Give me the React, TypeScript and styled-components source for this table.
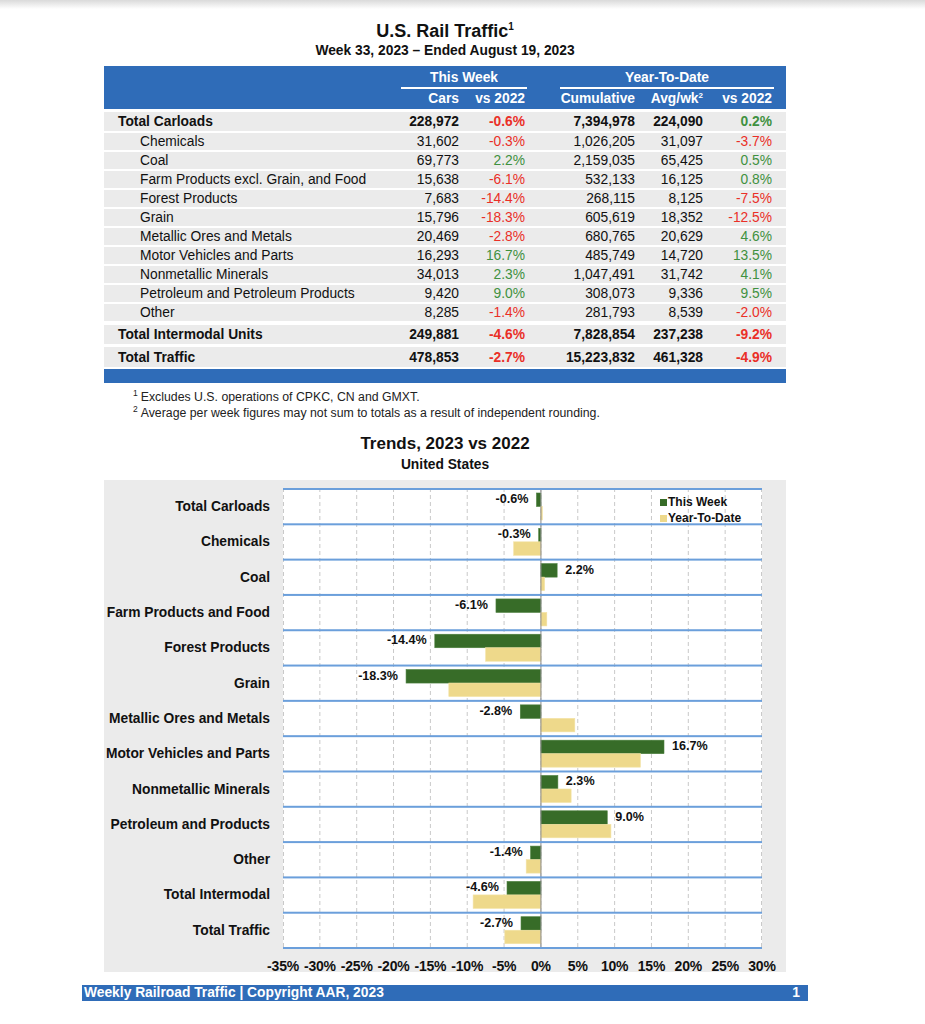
import React from 'react'
import styled, { createGlobalStyle } from 'styled-components'

const GlobalStyle = createGlobalStyle`
  html, body {
    margin: 0;
    padding: 0;
  }
  body {
    font-family: 'Liberation Sans', Arial, sans-serif;
    color: #111;
    background: linear-gradient(to bottom, #dadada 0px, #ffffff 9px) no-repeat, #fff;
  }
`

const COLS = '291px 64px 66px 35px 75px 68px 69px 14px'
const BLUE = '#2f6cb8'

const Sheet = styled.div`
  width: 682px;
  margin-left: 104px;
  padding-top: 20px;
`

const Title = styled.h1`
  margin: 0;
  font-size: 18px;
  line-height: 22px;
  font-weight: bold;
  text-align: center;
  sup {
    font-size: 10px;
    vertical-align: 7px;
    line-height: 0;
  }
`

const SubTitle = styled.div`
  margin-top: 1px;
  font-size: 13.8px;
  line-height: 16px;
  font-weight: bold;
  text-align: center;
`

const TableHead = styled.div`
  margin-top: 7px;
  background: ${BLUE};
  color: #fff;
  font-size: 13.8px;
  font-weight: bold;
  display: grid;
  grid-template-columns: ${COLS};
  padding: 4px 0 3px;
`

const GroupCell = styled.div<{ $from: number; $to: number; $inset: number }>`
  grid-row: 1;
  grid-column: ${p => p.$from} / ${p => p.$to};
  text-align: center;
  line-height: 15px;
  padding-bottom: 2px;
  border-bottom: 2px solid #fff;
  margin-left: ${p => p.$inset}px;
  margin-right: -2px;
`

const HeadCell = styled.div<{ $col: number }>`
  grid-row: 2;
  grid-column: ${p => p.$col};
  text-align: right;
  line-height: 15px;
  margin-top: 2px;
  white-space: nowrap;
  sup {
    font-size: 8px;
    vertical-align: 5px;
    line-height: 0;
  }
`

const BodyRow = styled.div<{ $gap: number; $h: number; $bold?: boolean }>`
  display: grid;
  grid-template-columns: ${COLS};
  align-items: center;
  height: ${p => p.$h}px;
  border-top: ${p => p.$gap}px solid #fff;
  background: #ebebeb;
  font-size: 13.8px;
  font-weight: ${p => (p.$bold ? 'bold' : 'normal')};
`

const Label = styled.div<{ $indent: number }>`
  padding-left: ${p => p.$indent}px;
  white-space: nowrap;
`

const Num = styled.div<{ $col: number; $tone?: 'up' | 'down' }>`
  grid-column: ${p => p.$col};
  text-align: right;
  white-space: nowrap;
  color: ${p => (p.$tone === 'down' ? '#ea2f27' : p.$tone === 'up' ? '#3f9140' : '#111')};
`

const BottomBar = styled.div`
  margin-top: 2px;
  height: 14px;
  background: ${BLUE};
`

const Notes = styled.div`
  margin-top: 6px;
  padding-left: 29px;
  font-size: 12.3px;
  line-height: 16px;
  color: #222;
  sup {
    font-size: 8.5px;
    vertical-align: 5px;
    line-height: 0;
    margin-right: 3px;
  }
`

const ChartTitle = styled.div`
  margin-top: 13px;
  font-size: 17px;
  line-height: 20px;
  font-weight: bold;
  text-align: center;
`

const ChartSub = styled.div`
  margin-top: 3px;
  font-size: 13.8px;
  line-height: 16px;
  font-weight: bold;
  text-align: center;
`

const ChartPanel = styled.div`
  margin-top: 7px;
  background: #ebebeb;
  padding-top: 8px;
  height: 492px;
  box-sizing: border-box;
  display: grid;
  grid-template-columns: 179px 479px 1fr;
  grid-template-rows: 461px auto;
`

const CatList = styled.div`
  display: grid;
  grid-template-rows: repeat(13, 35.31px);
  padding-top: 1px;
`

const Cat = styled.div`
  display: flex;
  align-items: center;
  justify-content: flex-end;
  padding-right: 13px;
  font-size: 13.8px;
  font-weight: bold;
  white-space: nowrap;
`

const Plot = styled.div`
  position: relative;
  background: #fff;
  height: 461px;
`

const Legend = styled.div`
  position: absolute;
  left: 377px;
  top: 6px;
  font-size: 12px;
  font-weight: bold;
  line-height: 16px;
`

const LegendItem = styled.div<{ $color: string }>`
  display: flex;
  align-items: center;
  &::before {
    content: '';
    width: 7px;
    height: 7px;
    background: ${p => p.$color};
    margin-right: 1px;
  }
`

const Axis = styled.div`
  grid-column: 2 / 4;
  display: grid;
  grid-template-columns: repeat(14, 36.846px);
  margin-left: -18.4px;
  padding-top: 9px;
  font-size: 14px;
  font-weight: bold;
  line-height: 16px;
  letter-spacing: -0.2px;
`

const Tick = styled.div`
  text-align: center;
  white-space: nowrap;
`

const Footer = styled.div`
  width: 726px;
  margin: 13px 0 0 82px;
  height: 16px;
  background: ${BLUE};
  color: #fff;
  font-size: 13.8px;
  font-weight: bold;
  line-height: 16px;
  display: flex;
  justify-content: space-between;
  padding: 0 8px 0 2px;
  box-sizing: border-box;
`

type Row = [string, string, string, string, string, string]

const carloads: Row[] = [
  ['Chemicals', '31,602', '-0.3%', '1,026,205', '31,097', '-3.7%'],
  ['Coal', '69,773', '2.2%', '2,159,035', '65,425', '0.5%'],
  ['Farm Products excl. Grain, and Food', '15,638', '-6.1%', '532,133', '16,125', '0.8%'],
  ['Forest Products', '7,683', '-14.4%', '268,115', '8,125', '-7.5%'],
  ['Grain', '15,796', '-18.3%', '605,619', '18,352', '-12.5%'],
  ['Metallic Ores and Metals', '20,469', '-2.8%', '680,765', '20,629', '4.6%'],
  ['Motor Vehicles and Parts', '16,293', '16.7%', '485,749', '14,720', '13.5%'],
  ['Nonmetallic Minerals', '34,013', '2.3%', '1,047,491', '31,742', '4.1%'],
  ['Petroleum and Petroleum Products', '9,420', '9.0%', '308,073', '9,336', '9.5%'],
  ['Other', '8,285', '-1.4%', '281,793', '8,539', '-2.0%'],
]

const trends: [string, number, number][] = [
  ['Total Carloads', -0.6, 0.2],
  ['Chemicals', -0.3, -3.7],
  ['Coal', 2.2, 0.5],
  ['Farm Products and Food', -6.1, 0.8],
  ['Forest Products', -14.4, -7.5],
  ['Grain', -18.3, -12.5],
  ['Metallic Ores and Metals', -2.8, 4.6],
  ['Motor Vehicles and Parts', 16.7, 13.5],
  ['Nonmetallic Minerals', 2.3, 4.1],
  ['Petroleum and Products', 9.0, 9.5],
  ['Other', -1.4, -2.0],
  ['Total Intermodal', -4.6, -9.2],
  ['Total Traffic', -2.7, -4.9],
]

const tone = (v: string) => (v.startsWith('-') ? 'down' : 'up')

const TableRow = ({ r, bold, gap, h, indent }: { r: Row; bold?: boolean; gap: number; h: number; indent: number }) => (
  <BodyRow $gap={gap} $h={h} $bold={bold}>
    <Label $indent={indent}>{r[0]}</Label>
    <Num $col={2}>{r[1]}</Num>
    <Num $col={3} $tone={tone(r[2])}>{r[2]}</Num>
    <Num $col={5}>{r[3]}</Num>
    <Num $col={6}>{r[4]}</Num>
    <Num $col={7} $tone={tone(r[5])}>{r[5]}</Num>
  </BodyRow>
)

const W = 479
const BAND = 35.31
const px = (v: number) => ((v + 35) * W) / 65

const TrendChart = () => {
  const ticks = Array.from({ length: 14 }, (_, i) => -35 + i * 5)
  const zero = px(0)
  return (
    <Plot>
      <svg width={W} height={461} style={{ display: 'block' }}>
        {ticks.map(t => (
          <line
            key={t}
            x1={Math.min(Math.max(px(t), 0.5), W - 0.5)}
            x2={Math.min(Math.max(px(t), 0.5), W - 0.5)}
            y1={0}
            y2={461}
            stroke="#c9c9c9"
            strokeDasharray="4 3"
          />
        ))}
        {trends.map(([name, wk, ytd], i) => {
          const y0 = i * BAND
          return (
            <g key={name}>
              <rect
                x={Math.min(px(wk), zero)}
                y={y0 + 5}
                width={Math.abs(px(wk) - zero)}
                height={13.5}
                fill="#376c28"
                stroke="#4b7f3c"
                strokeWidth={0.6}
              />
              <rect
                x={Math.min(px(ytd), zero)}
                y={y0 + 18.5}
                width={Math.abs(px(ytd) - zero)}
                height={13.5}
                fill="#eed98b"
                stroke="#f3e3a6"
                strokeWidth={0.6}
              />
              <text
                x={wk < 0 ? px(wk) - 8 : px(wk) + 8}
                y={y0 + 11}
                textAnchor={wk < 0 ? 'end' : 'start'}
                dominantBaseline="central"
                fontFamily="Liberation Sans, Arial, sans-serif"
                fontWeight="bold"
                fontSize={12.6}
                fill="#111"
              >
                {wk.toFixed(1)}%
              </text>
            </g>
          )
        })}
        <line x1={zero} x2={zero} y1={0} y2={461} stroke="#8a8a8a" strokeWidth={1} />
        {Array.from({ length: 14 }, (_, i) => (
          <rect key={i} x={0} y={Math.min(i * BAND, 459)} width={W} height={2} fill="#6b9fdb" />
        ))}
      </svg>
      <Legend>
        <LegendItem $color="#376c28">This Week</LegendItem>
        <LegendItem $color="#eed98b">Year-To-Date</LegendItem>
      </Legend>
    </Plot>
  )
}

const App = () => {
  return (
    <>
      <GlobalStyle />
      <Sheet>
        <Title>
          U.S. Rail Traffic<sup>1</sup>
        </Title>
        <SubTitle>Week 33, 2023 – Ended August 19, 2023</SubTitle>

        <TableHead>
          <GroupCell $from={2} $to={4} $inset={6}>This Week</GroupCell>
          <GroupCell $from={5} $to={8} $inset={0}>Year-To-Date</GroupCell>
          <HeadCell $col={2}>Cars</HeadCell>
          <HeadCell $col={3}>vs 2022</HeadCell>
          <HeadCell $col={5}>Cumulative</HeadCell>
          <HeadCell $col={6}>
            Avg/wk<sup>2</sup>
          </HeadCell>
          <HeadCell $col={7}>vs 2022</HeadCell>
        </TableHead>

        <TableRow r={['Total Carloads', '228,972', '-0.6%', '7,394,978', '224,090', '0.2%']} bold gap={3} h={19} indent={14} />
        {carloads.map(r => (
          <TableRow key={r[0]} r={r} gap={2} h={17} indent={36} />
        ))}
        <TableRow r={['Total Intermodal Units', '249,881', '-4.6%', '7,828,854', '237,238', '-9.2%']} bold gap={4} h={19} indent={14} />
        <TableRow r={['Total Traffic', '478,853', '-2.7%', '15,223,832', '461,328', '-4.9%']} bold gap={3} h={20} indent={14} />
        <BottomBar />

        <Notes>
          <div>
            <sup>1</sup>Excludes U.S. operations of CPKC, CN and GMXT.
          </div>
          <div>
            <sup>2</sup>Average per week figures may not sum to totals as a result of independent rounding.
          </div>
        </Notes>

        <ChartTitle>Trends, 2023 vs 2022</ChartTitle>
        <ChartSub>United States</ChartSub>

        <ChartPanel>
          <CatList>
            {trends.map(([name]) => (
              <Cat key={name}>{name}</Cat>
            ))}
          </CatList>
          <TrendChart />
          <div />
          <Axis>
            {Array.from({ length: 14 }, (_, i) => (
              <Tick key={i}>{-35 + i * 5}%</Tick>
            ))}
          </Axis>
        </ChartPanel>
      </Sheet>
      <Footer>
        <span>Weekly Railroad Traffic | Copyright AAR, 2023</span>
        <span>1</span>
      </Footer>
    </>
  )
}

export default App
